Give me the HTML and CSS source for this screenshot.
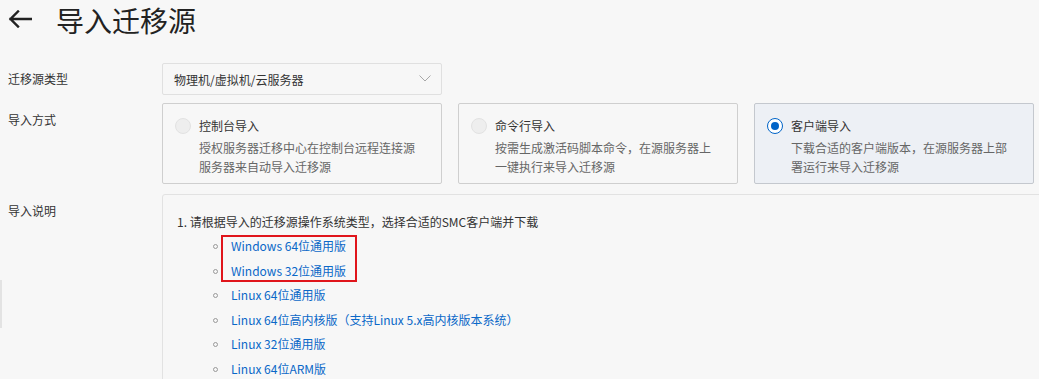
FILE: index.html
```html
<!DOCTYPE html>
<html lang="zh-CN">
<head>
<meta charset="utf-8">
<title>导入迁移源</title>
<link rel="stylesheet" href="styles.css">
</head>
<body>
<div class="page">
  <header class="header">
    <span class="back">
      <svg width="24" height="18" viewBox="0 0 24 18"><path d="M23 9H2.5M10 1.5L2.5 9l7.5 7.5" fill="none" stroke="#222" stroke-width="2.4" stroke-linecap="square"/></svg>
    </span>
    <h1 class="title">导入迁移源</h1>
  </header>

  <div class="form">
    <div class="label label-select">迁移源类型</div>
    <div class="field">
      <div class="select">
        <span>物理机/虚拟机/云服务器</span>
        <svg class="chev" width="12" height="7" viewBox="0 0 12 7"><path d="M0.5 0.5L6 6l5.5-5.5" fill="none" stroke="#a8a8a8" stroke-width="1"/></svg>
      </div>
    </div>

    <div class="label">导入方式</div>
    <div class="field cards">
      <div class="card">
        <span class="radio"></span>
        <div class="card-body">
          <div class="card-title">控制台导入</div>
          <div class="card-desc">授权服务器迁移中心在控制台远程连接源服务器来自动导入迁移源</div>
        </div>
      </div>
      <div class="card">
        <span class="radio"></span>
        <div class="card-body">
          <div class="card-title">命令行导入</div>
          <div class="card-desc">按需生成激活码脚本命令，在源服务器上一键执行来导入迁移源</div>
        </div>
      </div>
      <div class="card card-active">
        <span class="radio radio-on"></span>
        <div class="card-body">
          <div class="card-title">客户端导入</div>
          <div class="card-desc">下载合适的客户端版本，在源服务器上部署运行来导入迁移源</div>
        </div>
      </div>
    </div>

    <div class="label">导入说明</div>
    <div class="field">
      <div class="desc-box">
        <p class="step">1. 请根据导入的迁移源操作系统类型，选择合适的SMC客户端并下载</p>
        <ul class="links">
          <li><a>Windows 64位通用版</a></li>
          <li><a>Windows 32位通用版</a></li>
          <li><a>Linux 64位通用版</a></li>
          <li><a>Linux 64位高内核版（支持Linux 5.x高内核版本系统）</a></li>
          <li><a>Linux 32位通用版</a></li>
          <li><a>Linux 64位ARM版</a></li>
          <span class="mark"></span>
        </ul>
      </div>
    </div>
  </div>
  <div class="side-tab"></div>
</div>
</body>
</html>
```

FILE: styles.css
```css
html, body {
  margin: 0;
  padding: 0;
  background: #f7f7f7;
  overflow: hidden;
}
body {
  font-family: "Noto Sans CJK SC", "Noto Sans", sans-serif;
  font-size: 12px;
  color: #333;
}
.page {
  width: 1039px;
  height: 379px;
  overflow: hidden;
}
.header {
  display: flex;
  align-items: center;
  height: 41px;
  padding-left: 8px;
}
.back {
  display: flex;
  width: 24px;
  height: 18px;
  margin-right: 24px;
  margin-bottom: 3px;
}
.title {
  margin: 0;
  font-size: 28px;
  font-weight: 400;
  line-height: 41px;
  color: #222;
}
.form {
  display: grid;
  grid-template-columns: 162px 1fr;
  row-gap: 0;
  margin-top: 22px;
}
.label {
  padding-left: 8px;
  padding-top: 8px;
  line-height: 18px;
  color: #333;
}
.label.label-select {
  padding-top: 0;
  line-height: 32px;
}
.field {
  margin-bottom: 8px;
}
.select {
  width: 280px;
  height: 32px;
  box-sizing: border-box;
  border: 1px solid #e0e0e0;
  border-radius: 2px;
  display: flex;
  align-items: center;
  justify-content: space-between;
  padding: 0 10px 0 11px;
  color: #333;
}
.chev {
  display: block;
  margin-top: -2px;
}
.cards {
  display: flex;
  gap: 16px;
  margin-bottom: 10px;
}
.card {
  width: 280px;
  height: 81px;
  box-sizing: border-box;
  border: 1px solid #cfcfcf;
  border-radius: 2px;
  display: flex;
  align-items: flex-start;
  padding: 12px 12px 0 12px;
}
.card-active {
  background: #edf0f5;
  border-color: #c4c8ce;
}
.radio {
  flex: none;
  width: 16px;
  height: 16px;
  box-sizing: border-box;
  border-radius: 50%;
  background: #eeeeee;
  border: 1px solid #e2e2e2;
  margin-top: 2px;
  margin-right: 8px;
}
.radio-on {
  background: #fff;
  border: 1px solid #0064c8;
  display: flex;
  align-items: center;
  justify-content: center;
}
.radio-on::after {
  content: "";
  width: 8px;
  height: 8px;
  border-radius: 50%;
  background: #0064c8;
}
.card-title {
  line-height: 20px;
  color: #333;
}
.card-desc {
  margin-top: 3px;
  line-height: 18.5px;
  color: #666;
  width: 222px;
}
.desc-box {
  width: 960px;
  height: 260px;
  box-sizing: border-box;
  border: 1px solid #e2e2e2;
  border-radius: 3px;
  padding: 15px 14px;
}
.step {
  margin: 0;
  line-height: 24px;
  color: #333;
}
.links {
  position: relative;
  list-style: none;
  margin: 0;
  padding: 0 0 0 54px;
}
.links li {
  position: relative;
  line-height: 24.5px;
}
.links li::before {
  content: "";
  position: absolute;
  left: -18px;
  top: 10px;
  width: 5px;
  height: 5px;
  box-sizing: border-box;
  border: 1px solid #999;
  border-radius: 50%;
}
.links a {
  color: #0a68c8;
  text-decoration: none;
}
.mark {
  position: absolute;
  left: 44px;
  top: 1px;
  width: 136px;
  height: 47px;
  box-sizing: border-box;
  border: 2px solid #e0151b;
}
.side-tab {
  position: fixed;
  left: 0;
  top: 280px;
  width: 2px;
  height: 48px;
  background: #e3e3e3;
}
```
